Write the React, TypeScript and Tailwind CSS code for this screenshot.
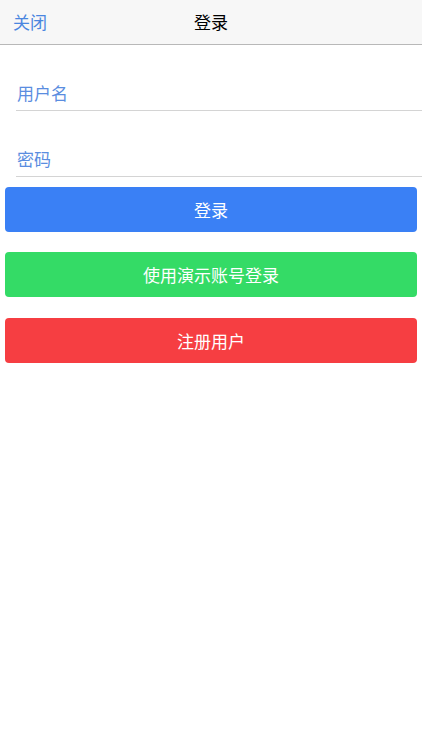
import React from "react";

export default function App() {
  const font = { fontFamily: '"Noto Sans CJK SC", "Noto Sans", sans-serif' };
  return (
    <div className="w-[422px] h-[750px] bg-white flex flex-col" style={font}>
      <div className="h-[45px] bg-[#f7f7f7] border-b border-[#b8b8b8] flex items-center relative">
        <span className="ml-[13px] text-[17px] text-[#4a86e0]">关闭</span>
        <span className="absolute left-0 right-0 text-center text-[17px] text-black pointer-events-none">登录</span>
      </div>
      <div className="pl-4 mt-[31px] flex flex-col gap-[31px]">
        <div className="h-[35px] border-b border-[#d4d4d4] flex items-center">
          <span className="text-[17px] text-[#5a8de0] ml-[1px] -mt-[1px]">用户名</span>
        </div>
        <div className="h-[35px] border-b border-[#d4d4d4] flex items-center">
          <span className="text-[17px] text-[#5a8de0] ml-[1px] -mt-[1px]">密码</span>
        </div>
      </div>
      <div className="px-[5px] mt-[10px] flex flex-col gap-[20px]">
        <button className="h-[45px] rounded-[4px] bg-[#3a80f5] text-white text-[17px]">登录</button>
        <button className="h-[45px] rounded-[4px] bg-[#34db66] text-white text-[17px]">使用演示账号登录</button>
        <button className="h-[45px] mt-[1px] rounded-[4px] bg-[#f63e42] text-white text-[17px]">注册用户</button>
      </div>
    </div>
  );
}
